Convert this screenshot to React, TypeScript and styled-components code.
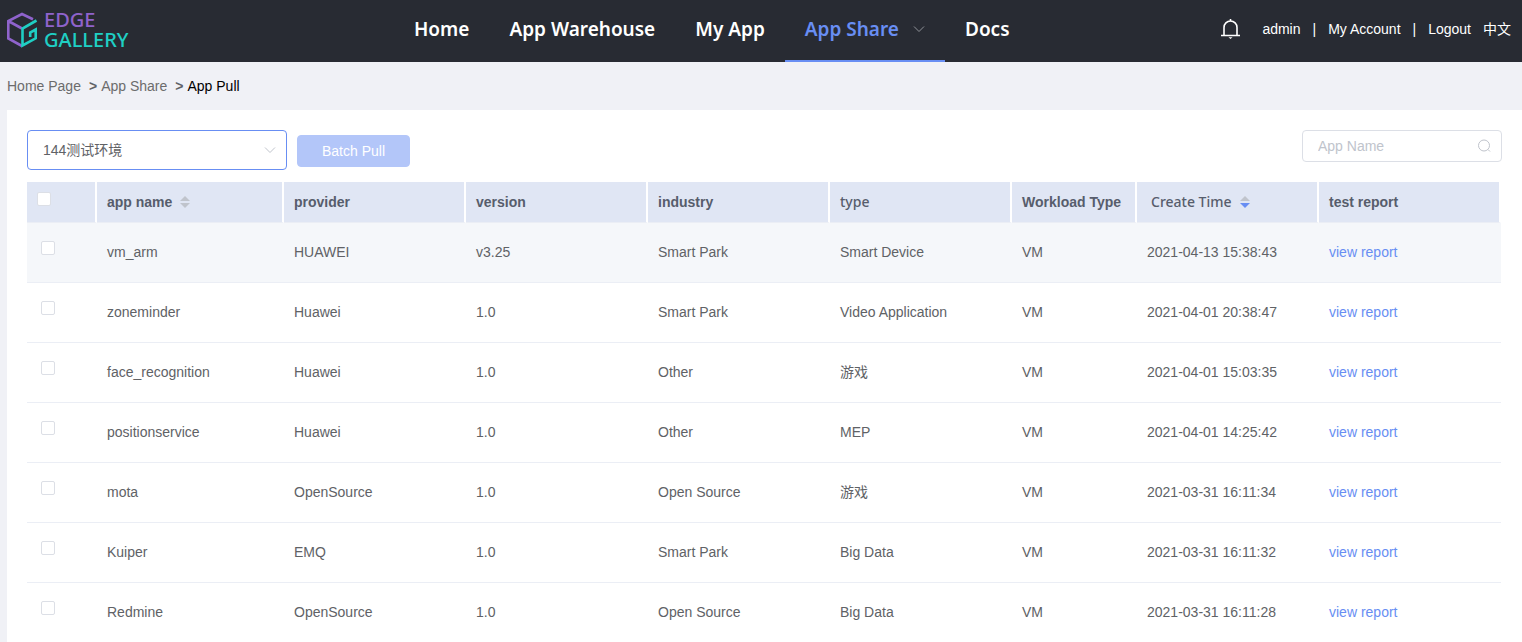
import React from 'react';
import styled, { createGlobalStyle } from 'styled-components';

const GlobalStyle = createGlobalStyle`
  * { box-sizing: border-box; }
  body {
    margin: 0;
    background: #f0f1f6;
    color: #606266;
    font-family: "Liberation Sans", "Noto Sans CJK SC", sans-serif;
    font-size: 14px;
  }
  a { text-decoration: none; }
`;

const TopBar = styled.header`
  display: grid;
  grid-template-columns: minmax(140px, 388px) auto 1fr;
  align-items: center;
  height: 62px;
  padding: 0 11px 0 6px;
  background: #282b33;
`;

const Brand = styled.a`
  display: flex;
  align-items: center;
  gap: 6px;
  padding-bottom: 2px;
`;

const BrandName = styled.span`
  display: flex;
  flex-direction: column;
  font-family: "Noto Sans", sans-serif;
  font-size: 20px;
  font-weight: 500;
  line-height: 20px;
  color: #1fcfc4;
`;

const BrandTop = styled.span`
  color: #8f63cc;
`;

const Nav = styled.nav`
  display: flex;
  height: 62px;
`;

const NavLink = styled.a<{ $active?: boolean }>`
  display: flex;
  align-items: center;
  gap: 14px;
  padding: 0 20px 2px;
  border-bottom: 2px solid ${(p) => (p.$active ? '#688ef3' : 'transparent')};
  color: ${(p) => (p.$active ? '#688ef3' : '#fff')};
  font-family: "Noto Sans", sans-serif;
  font-size: 19px;
  font-weight: 600;
  line-height: 28px;
  white-space: nowrap;
`;

const UserMenu = styled.div`
  display: flex;
  align-items: center;
  justify-content: flex-end;
  gap: 12px;
  padding-bottom: 4px;
  color: #fff;
  line-height: 20px;
  white-space: nowrap;
`;

const IconButton = styled.button`
  display: flex;
  margin-right: 8px;
  padding: 0;
  border: 0;
  background: none;
  color: inherit;
`;

const UserLink = styled.a`
  color: #fff;
`;

const Crumbs = styled.nav`
  display: flex;
  gap: 8px;
  padding: 16px 7px;
  line-height: 16px;
`;

const Crumb = styled.a<{ $current?: boolean }>`
  color: ${(p) => (p.$current ? '#000' : '#6c6c6c')};
`;

const CrumbStep = styled.span`
  display: flex;
  gap: 4px;
`;

const Panel = styled.main`
  margin-left: 7px;
  padding: 20px;
  background: #fff;
`;

const Toolbar = styled.div`
  display: flex;
  align-items: flex-start;
  gap: 10px;
  margin-bottom: 12px;
`;

const SelectBox = styled.label`
  display: grid;
  width: 260px;
  align-items: center;

  > * { grid-area: 1 / 1; }
  > svg { justify-self: end; margin-right: 11px; pointer-events: none; }
`;

const Select = styled.select`
  appearance: none;
  height: 40px;
  padding: 0 30px 0 15px;
  border: 1px solid #688ef3;
  border-radius: 4px;
  background: #fff;
  color: #606266;
  font: inherit;
`;

const PullButton = styled.button`
  height: 32px;
  margin-top: 5px;
  padding: 0 24px;
  border: 1px solid #b3c6f9;
  border-radius: 4px;
  background: #b3c6f9;
  color: #fff;
  font: inherit;
`;

const SearchBox = styled.label`
  display: flex;
  align-items: center;
  width: 200px;
  height: 32px;
  margin-left: auto;
  padding: 0 10px 0 15px;
  border: 1px solid #dcdfe6;
  border-radius: 4px;
`;

const SearchInput = styled.input`
  flex: 1;
  min-width: 0;
  padding: 0;
  border: 0;
  outline: 0;
  background: none;
  color: #606266;
  font: inherit;

  &::placeholder { color: #c0c4cc; }
`;

const Table = styled.table`
  width: calc(100% - 1px);
  table-layout: fixed;
  border-collapse: separate;
  border-spacing: 0;
`;

const Col = styled.col<{ $width?: number }>`
  width: ${(p) => (p.$width ? `${p.$width}px` : 'auto')};
`;

const HeadCell = styled.th`
  height: 41px;
  padding: 0 10px;
  border-right: 2px solid #fff;
  border-bottom: 1px solid #ebeef5;
  background: #e0e6f4;
  background-clip: padding-box;
  color: #575d6c;
  line-height: 20px;
  text-align: left;
  white-space: nowrap;
`;

const SortButton = styled.button<{ $plain?: boolean }>`
  display: flex;
  align-items: center;
  gap: 8px;
  padding: 0 ${(p) => (p.$plain ? '4px' : '0')};
  border: 0;
  background: none;
  color: inherit;
  font: inherit;
`;

const LightLabel = styled.span`
  font-family: "Noto Sans", sans-serif;
  font-weight: 500;
`;

const Row = styled.tr<{ $hovered?: boolean }>`
  background: ${(p) => (p.$hovered ? '#f5f7fa' : '#fff')};
`;

const Cell = styled.td`
  height: 60px;
  padding: 0 10px 2px;
  border-bottom: 1px solid #ebeef5;
  line-height: 22px;
`;

const CheckCell = styled(Cell)`
  padding: 0 14px 10px;
`;

const CheckHead = styled(HeadCell)`
  padding-bottom: 6px;
`;

const Checkbox = styled.input`
  display: block;
  appearance: none;
  width: 14px;
  height: 14px;
  margin: 0;
  border: 1px solid #dcdfe6;
  border-radius: 2px;
  background: #fff;
`;

const ReportLink = styled.a`
  color: #688ef3;
`;

const Logo = () => (
  <svg width="32" height="36" viewBox="0 0 32 36" fill="none" strokeWidth="2.6">
    <path d="M27 7.200 16 2 2.300 9V26.500L16 34M2.300 9 16 16.500" stroke="#8f63cc" />
    <path d="M30.500 8.500 16.500 16.500V33.500L29.700 26.300V17.500L24.200 20.500V25" stroke="#1fcfc4" />
  </svg>
);

const Bell = () => (
  <svg width="22" height="22" viewBox="0 0 22 22" fill="none" stroke="#fff" strokeWidth="1.600">
    <path d="M1 17.500H20M4 17.500V9.500A6.500 6.500 0 0 1 17 9.500V17.500M10.500 1V3" />
    <path d="M8.500 19.300H12.500L10.500 21Z" fill="#fff" stroke="none" />
  </svg>
);

const Chevron = ({ size, color }: { size: number; color: string }) => (
  <svg width={size} height={size} viewBox="0 0 12 12" fill="none" stroke={color}>
    <path d="M1 3.500 6 8.500 11 3.500" />
  </svg>
);

const Magnifier = () => (
  <svg width="14" height="14" viewBox="0 0 14 14" fill="none" stroke="#c0c4cc">
    <circle cx="7" cy="6.500" r="5.500" />
    <path d="M11 10.500 13 12.500" />
  </svg>
);

const SortArrows = ({ descending }: { descending?: boolean }) => (
  <svg width="10" height="12" viewBox="0 0 10 12">
    <path d="M0 5 5 0 10 5Z" fill="#c0c4cc" />
    <path d="M0 7 5 12 10 7Z" fill={descending ? '#688ef3' : '#c0c4cc'} />
  </svg>
);

const apps = [
  ['vm_arm', 'HUAWEI', 'v3.25', 'Smart Park', 'Smart Device', 'VM', '2021-04-13 15:38:43'],
  ['zoneminder', 'Huawei', '1.0', 'Smart Park', 'Video Application', 'VM', '2021-04-01 20:38:47'],
  ['face_recognition', 'Huawei', '1.0', 'Other', '游戏', 'VM', '2021-04-01 15:03:35'],
  ['positionservice', 'Huawei', '1.0', 'Other', 'MEP', 'VM', '2021-04-01 14:25:42'],
  ['mota', 'OpenSource', '1.0', 'Open Source', '游戏', 'VM', '2021-03-31 16:11:34'],
  ['Kuiper', 'EMQ', '1.0', 'Smart Park', 'Big Data', 'VM', '2021-03-31 16:11:32'],
  ['Redmine', 'OpenSource', '1.0', 'Open Source', 'Big Data', 'VM', '2021-03-31 16:11:28'],
];

export default function App() {
  return (
    <>
      <GlobalStyle />
      <TopBar>
        <Brand href="#">
          <Logo />
          <BrandName>
            <BrandTop>EDGE</BrandTop>
            <span>GALLERY</span>
          </BrandName>
        </Brand>
        <Nav>
          <NavLink href="#">Home</NavLink>
          <NavLink href="#">App Warehouse</NavLink>
          <NavLink href="#">My App</NavLink>
          <NavLink href="#" $active>
            App Share
            <Chevron size={12} color="#909399" />
          </NavLink>
          <NavLink href="#">Docs</NavLink>
        </Nav>
        <UserMenu>
          <IconButton aria-label="Notifications"><Bell /></IconButton>
          <span>admin</span>
          <span>|</span>
          <UserLink href="#">My Account</UserLink>
          <span>|</span>
          <UserLink href="#">Logout</UserLink>
          <UserLink href="#">中文</UserLink>
        </UserMenu>
      </TopBar>
      <Crumbs>
        <Crumb href="#">Home Page</Crumb>
        <CrumbStep><b>&gt;</b><Crumb href="#">App Share</Crumb></CrumbStep>
        <CrumbStep><b>&gt;</b><Crumb href="#" $current>App Pull</Crumb></CrumbStep>
      </Crumbs>
      <Panel>
        <Toolbar>
          <SelectBox>
            <Select aria-label="Environment"><option>144测试环境</option></Select>
            <Chevron size={12} color="#c0c4cc" />
          </SelectBox>
          <PullButton disabled>Batch Pull</PullButton>
          <SearchBox>
            <SearchInput placeholder="App Name" aria-label="App Name" />
            <Magnifier />
          </SearchBox>
        </Toolbar>
        <Table>
          <colgroup>
            <Col $width={70} />
            <Col $width={187} />
            <Col /><Col /><Col /><Col />
            <Col $width={125} />
            <Col /><Col />
          </colgroup>
          <thead>
            <tr>
              <CheckHead><Checkbox type="checkbox" aria-label="Select all apps" /></CheckHead>
              <HeadCell><SortButton>app name<SortArrows /></SortButton></HeadCell>
              <HeadCell>provider</HeadCell>
              <HeadCell>version</HeadCell>
              <HeadCell>industry</HeadCell>
              <HeadCell><LightLabel>type</LightLabel></HeadCell>
              <HeadCell>Workload Type</HeadCell>
              <HeadCell>
                <SortButton $plain><LightLabel>Create Time</LightLabel><SortArrows descending /></SortButton>
              </HeadCell>
              <HeadCell>test report</HeadCell>
            </tr>
          </thead>
          <tbody>
            {apps.map((app, index) => (
              <Row key={app[0]} $hovered={index === 0}>
                <CheckCell><Checkbox type="checkbox" aria-label={`Select ${app[0]}`} /></CheckCell>
                {app.map((value, column) => <Cell key={column}>{value}</Cell>)}
                <Cell><ReportLink href="#">view report</ReportLink></Cell>
              </Row>
            ))}
          </tbody>
        </Table>
      </Panel>
    </>
  );
}
